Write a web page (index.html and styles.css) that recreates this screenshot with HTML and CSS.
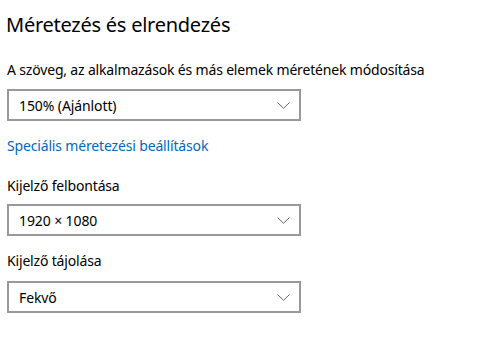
FILE: index.html
```html
<!DOCTYPE html>
<html lang="hu">
<head>
<meta charset="utf-8">
<link rel="stylesheet" href="styles.css">
</head>
<body>
<div class="page">
  <h1 class="title">Méretezés és elrendezés</h1>
  <div class="label l1">A szöveg, az alkalmazások és más elemek méretének módosítása</div>
  <div class="select s1"><span class="value">150% (Ajánlott)</span><svg class="chev" width="13" height="7" viewBox="0 0 13 7"><path d="M0.5 0.5 L6.5 6.3 L12.5 0.5" fill="none" stroke="#666" stroke-width="1"/></svg></div>
  <div class="link">Speciális méretezési beállítások</div>
  <div class="label l2">Kijelző felbontása</div>
  <div class="select s2"><span class="value">1920 × 1080</span><svg class="chev" width="13" height="7" viewBox="0 0 13 7"><path d="M0.5 0.5 L6.5 6.3 L12.5 0.5" fill="none" stroke="#666" stroke-width="1"/></svg></div>
  <div class="label l3">Kijelző tájolása</div>
  <div class="select s3"><span class="value">Fekvő</span><svg class="chev" width="13" height="7" viewBox="0 0 13 7"><path d="M0.5 0.5 L6.5 6.3 L12.5 0.5" fill="none" stroke="#666" stroke-width="1"/></svg></div>
</div>
</body>
</html>
```
FILE: styles.css
```css
html, body {
  margin: 0;
  padding: 0;
  background: #fff;
}
body {
  font-family: "Noto Sans", "Open Sans", sans-serif;
  color: #000;
}
.page {
  padding: 11px 0 0 7px;
}
.title {
  margin: 0 0 0 -1px;
  font-size: 20px;
  line-height: 28px;
  font-weight: normal;
  letter-spacing: -0.25px;
}
.label {
  font-size: 14px;
  line-height: 20px;
  letter-spacing: -0.17px;
}
.l1 { margin-top: 21px; }
.l2 { margin-top: 20px; }
.l3 { margin-top: 15px; }
.select {
  box-sizing: border-box;
  width: 294px;
  height: 32px;
  border: 2px solid #999;
  display: flex;
  align-items: center;
  justify-content: space-between;
  padding: 0 9px 0 10px;
  font-size: 14px;
  letter-spacing: -0.1px;
}
.s1 { margin-top: 9px; }
.s2 { margin-top: 8px; }
.s3 { margin-top: 10px; }
.chev { display: block; }
.link {
  margin-top: 15px;
  font-size: 14px;
  line-height: 20px;
  color: #0067c0;
  letter-spacing: -0.16px;
}
```
